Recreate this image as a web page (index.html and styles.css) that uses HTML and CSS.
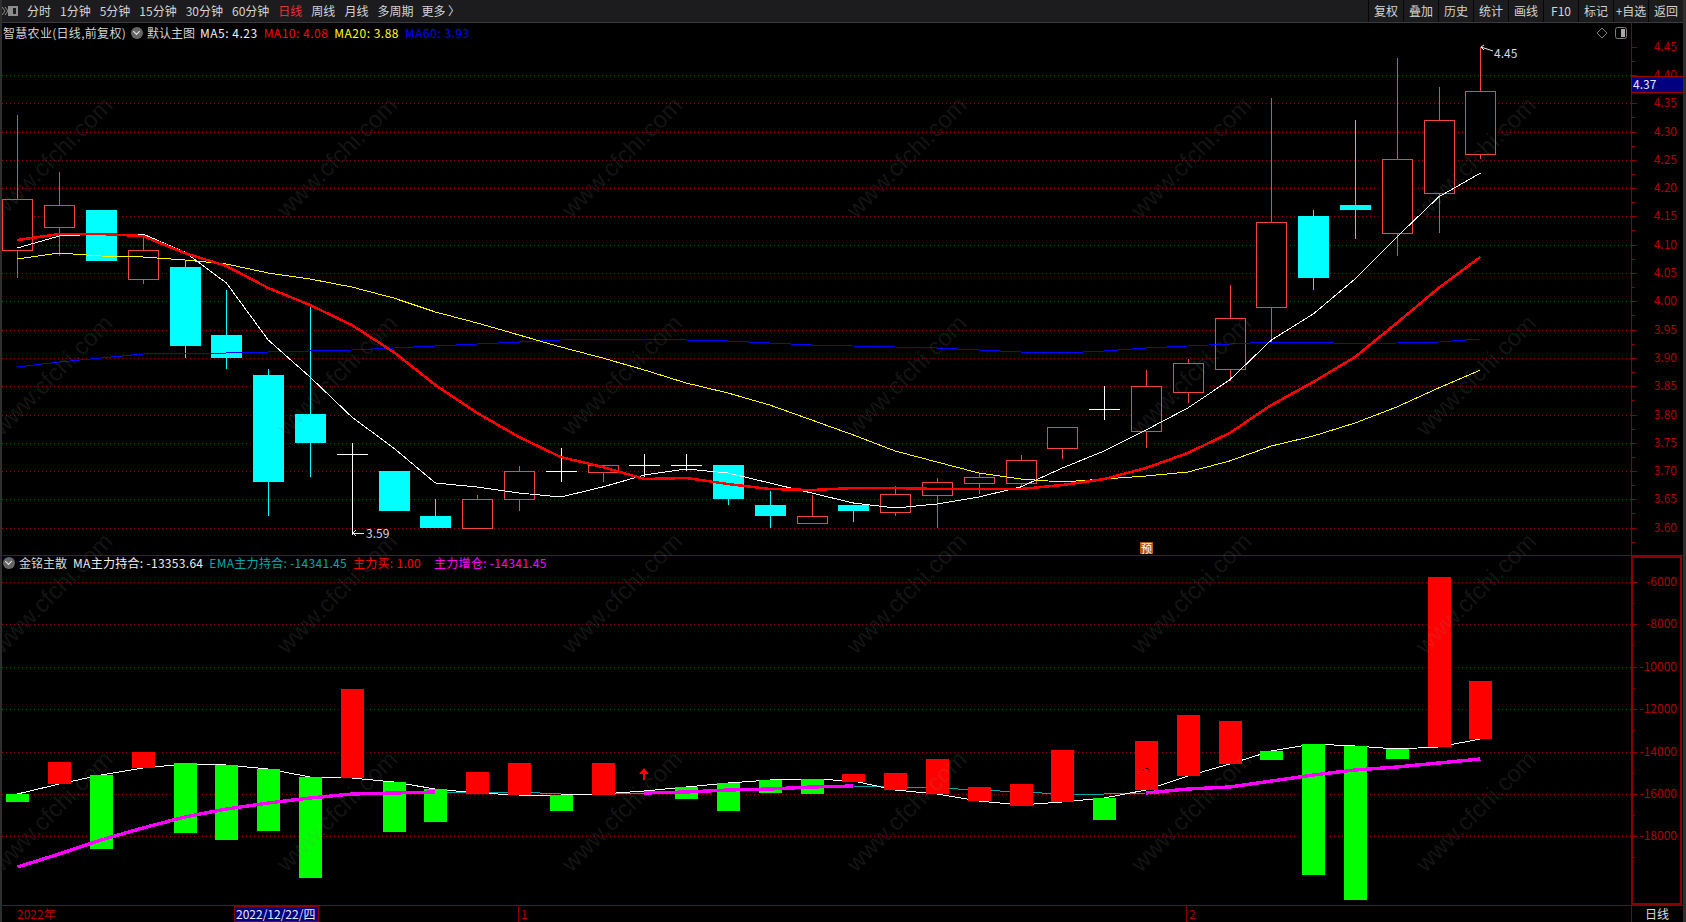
FILE: index.html
```html
<!DOCTYPE html>
<html lang="zh-CN">
<head>
	<meta charset="UTF-8">
	<title>智慧农业 日线</title>
	<link rel="stylesheet" href="styles.css">
</head>
<body>
	<div class="terminal">
		<!-- 顶部工具栏 -->
		<header class="toolbar">
			<svg class="collapse-icon" width="17" height="12" viewBox="0 0 17 12">
				<path d="M1 2l3 4-3 4M4 2l3 4-3 4" fill="none" stroke="#8c8c8c"/>
				<rect x="7.5" y="1.5" width="9" height="9" fill="#8c8c8c" stroke="#8c8c8c"/>
				<rect x="12" y="3" width="3" height="6" fill="#1c1c1e"/>
			</svg>
			<nav class="periods">
				<a>分时</a><a>1分钟</a><a>5分钟</a><a>15分钟</a><a>30分钟</a><a>60分钟</a>
				<a class="cur">日线</a><a>周线</a><a>月线</a><a>多周期</a><a class="more">更多 〉</a>
			</nav>
			<nav class="tools">
				<a>复权</a><a>叠加</a><a>历史</a><a>统计</a><a>画线</a><a>F10</a><a>标记</a><a>+自选</a><a>返回</a>
			</nav>
		</header>

		<div class="panels">
			<!-- 主图 -->
			<section class="panel panel-main">
				<div class="plot">
					<svg id="price-chart" class="chart" viewBox="2 23 1629 532"></svg>
					<div class="legend legend-main">
						<span class="stock-name">智慧农业(日线,前复权)</span>
						<i class="drop"></i>
						<span class="tpl-name">默认主图</span>
						<span class="c-white">MA5: 4.23</span>
						<span class="c-red">MA10: 4.08</span>
						<span class="c-yellow">MA20: 3.88</span>
						<span class="c-blue">MA60: 3.93</span>
					</div>
					<div class="corner-icons">
						<svg width="12" height="12" viewBox="0 0 12 12"><path d="M6 1l5 5-5 5-5-5z" fill="none" stroke="#7c7c7c"/></svg>
						<svg width="12" height="12" viewBox="0 0 12 12"><rect x=".5" y=".5" width="11" height="11" rx="2" fill="none" stroke="#7c7c7c"/><rect x="6" y="2" width="4" height="8" fill="#a8a8a8"/></svg>
					</div>
				</div>
				<svg id="price-axis" class="axis" viewBox="1631 23 52 532"></svg>
			</section>

			<!-- 副图 -->
			<section class="panel panel-sub">
				<div class="plot">
					<svg id="sub-chart" class="chart" viewBox="2 556 1629 349"></svg>
					<div class="legend legend-sub">
						<i class="drop"></i>
						<span class="tpl-name">金铭主散</span>
						<span class="c-white">MA主力持合: -13353.64</span>
						<span class="c-cyan">EMA主力持合: -14341.45</span>
						<span class="c-red">主力买: 1.00</span>
						<span class="c-magenta">主力增仓: -14341.45</span>
					</div>
				</div>
				<svg id="sub-axis" class="axis" viewBox="1631 556 52 349"></svg>
			</section>

			<svg id="watermark" class="watermark" viewBox="2 23 1629 882"></svg>
		</div>

		<!-- 底部日期轴 -->
		<footer class="date-bar">
			<svg id="date-axis" class="date-axis" viewBox="2 906 1629 16"></svg>
			<div class="cycle-name">日线</div>
		</footer>
	</div>
	<script src="chart.js"></script>
</body>
</html>
```

FILE: styles.css
```css
body{
	margin:0;
	padding:0;
	background:#000;
}
a{
	cursor:pointer;
}
.terminal{
	width:1681px;
	height:922px;
	border-left:2px solid #2e2e2e;
	border-right:3px solid #2e2e2e;
	display:flex;
	flex-direction:column;
	overflow:hidden;
	background:#000;
	color:#d4d4d4;
	font-family:"Noto Sans CJK SC","Liberation Sans",sans-serif;
	font-size:12px;
}

/* 工具栏 */
.toolbar{
	height:22px;
	border-bottom:1px solid #3a3a3c;
	background:#1c1c1e;
	display:flex;
	align-items:center;
	justify-content:space-between;
	margin:0 -3px 0 -2px;
	flex:none;
}
.collapse-icon{
	flex:none;
	margin-left:1px;
}
.periods{
	flex:1;
	display:flex;
	gap:9px;
	margin-left:9px;
}
.periods a{
	line-height:22px;
	white-space:nowrap;
}
.periods .cur{
	color:#e83232;
}
.periods .more{
	margin-left:-1px;
}
.tools{
	display:flex;
	margin-right:3px;
}
.tools a{
	width:34px;
	height:22px;
	line-height:22px;
	text-align:center;
	border-left:1px solid #060606;
	white-space:nowrap;
}

/* 图表区 */
.panels{
	position:relative;
	flex:none;
}
.panel{
	display:flex;
	border-bottom:1px solid #8a0000;
}
.panel-main{
	height:532px;
}
.panel-sub{
	height:349px;
}
.plot{
	position:relative;
	width:1629px;
	height:100%;
}
.chart{
	display:block;
	width:1629px;
	height:100%;
}
.axis{
	display:block;
	width:52px;
	height:100%;
}
.watermark{
	position:absolute;
	left:0;
	top:0;
	width:1629px;
	height:882px;
	pointer-events:none;
}

/* 图例 */
.legend{
	position:absolute;
	left:1px;
	top:2px;
	height:16px;
	display:flex;
	align-items:center;
	white-space:nowrap;
	line-height:16px;
}
.legend span{
	letter-spacing:.3px;
}
.legend .stock-name{
	margin-right:5px;
}
.legend .tpl-name{
	margin:0 6px 0 4px;
	letter-spacing:0;
}
.legend span+span{
	margin-right:6px;
}
.legend-main span+span{
	letter-spacing:.5px;
}
.legend-main .tpl-name{
	margin-right:5px;
}
.legend-sub{
	left:1px;
	top:-1px;
}
.legend-sub .c-red{
	margin-right:13px;
}
.drop{
	display:block;
	position:relative;
	width:12px;
	height:12px;
	border-radius:50%;
	background:#666;
	flex:none;
}
.drop:after{
	content:"";
	position:absolute;
	left:3px;
	top:2px;
	width:4px;
	height:4px;
	border-right:1px solid #eee;
	border-bottom:1px solid #eee;
	transform:rotate(45deg);
}
.c-white{
	color:#f0f0f0;
}
.c-red{
	color:#ff0000;
}
.c-yellow{
	color:#ffff00;
}
.c-blue{
	color:#0000ff;
}
.c-cyan{
	color:#00a8a8;
}
.c-magenta{
	color:#ff00ff;
}
.corner-icons{
	position:absolute;
	right:4px;
	top:4px;
	display:flex;
	gap:7px;
}
.corner-icons svg{
	display:block;
}

/* 日期轴 */
.date-bar{
	flex:1;
	display:flex;
	min-height:0;
}
.date-axis{
	display:block;
	width:1629px;
	height:16px;
}
.cycle-name{
	box-sizing:border-box;
	width:52px;
	border-left:1px solid #8a0000;
	padding-left:13px;
	line-height:15px;
	color:#dcdcdc;
}

/* svg 文字 */
.axis text,.date-axis text,.chart text{
	font-family:"Noto Sans CJK SC","Liberation Sans",sans-serif;
	font-size:12px;
}
.axis-label{
	fill:#b00000;
	text-anchor:end;
	dominant-baseline:central;
}
.date-label{
	fill:#b00000;
	dominant-baseline:central;
}
.date-cur{
	fill:#e8e8f8;
	dominant-baseline:central;
}
.note{
	fill:#d4d8e8;
	dominant-baseline:central;
}
.tag-text{
	fill:#e8e8ff;
	dominant-baseline:central;
}
.chart .badge-text{
	fill:#fff;
	font-size:11px;
	text-anchor:middle;
	dominant-baseline:central;
}
.watermark text{
	font-family:"Liberation Sans",sans-serif;
	font-size:24px;
	fill:rgba(128,128,128,.16);
	text-anchor:middle;
	dominant-baseline:central;
}
.crisp{
	shape-rendering:crispEdges;
}
```

FILE: chart.js
```js
// 每根K线的横坐标
var STEP = 41.8;
function xAt(i) {
	return 17.4 + STEP * i;
}

var SVG_NS = 'http://www.w3.org/2000/svg';
function add(parent, tag, attrs, text) {
	var el = document.createElementNS(SVG_NS, tag);
	for (var k in attrs) {
		el.setAttribute(k, attrs[k]);
	}
	if (text) el.textContent = text;
	parent.appendChild(el);
	return el;
}
function polyline(parent, ys, from, to, color, width) {
	var pts = [];
	for (var i = from; i <= to; i++) {
		pts.push(xAt(i).toFixed(1) + ',' + ys[i]);
	}
	add(parent, 'polyline', {
		points: pts.join(' '),
		fill: 'none',
		stroke: color,
		'stroke-width': width,
		'stroke-linejoin': 'round',
		class: 'crisp'
	});
}
function gridLine(parent, y) {
	add(parent, 'line', {
		x1: 2, x2: 1631, y1: y + .5, y2: y + .5,
		stroke: '#9a0000',
		'stroke-dasharray': '1 3',
		class: 'crisp'
	});
}

// K线: 上影, 下影, 实体上, 实体下, 类型(u阳 d阴 x十字)
var candles = [
	[115, 278, 199, 250, 'u'], [172, 256, 205, 227, 'u'], [210, 261, 210, 261, 'd'],
	[235, 284, 250, 279, 'u'], [261, 358, 267, 346, 'd'], [290, 369, 335, 358, 'd'],
	[369, 516, 375, 482, 'd'], [307, 477, 414, 443, 'd'], [443, 535, 454, 454, 'x'],
	[471, 511, 471, 511, 'd'], [499, 528, 516, 528, 'd'], [495, 528, 499, 528, 'u'],
	[466, 511, 471, 499, 'u'], [448, 482, 471, 471, 'x'], [465, 482, 465, 472, 'u'],
	[454, 477, 465, 465, 'x'], [454, 471, 465, 465, 'x'], [465, 505, 465, 499, 'd'],
	[491, 528, 505, 516, 'd'], [495, 523, 516, 523, 'u'], [505, 522, 505, 511, 'd'],
	[486, 516, 494, 512, 'u'], [478, 528, 482, 495, 'u'], [473, 494, 477, 483, 'u'],
	[455, 486, 460, 483, 'u'], [427, 459, 427, 448, 'u'], [386, 420, 409, 409, 'x'],
	[370, 448, 386, 431, 'u'], [359, 403, 363, 392, 'u'], [285, 381, 318, 369, 'u'],
	[98, 342, 222, 307, 'u'], [210, 290, 216, 278, 'd'], [120, 239, 205, 210, 'd'],
	[58, 256, 159, 233, 'u'], [87, 233, 120, 193, 'u'], [47, 159, 91, 154, 'u']
];

var ma5 = [248, 236, 234, 234, 252, 283, 340, 377, 417, 448, 483, 487, 493, 497, 487, 475, 469, 473, 483, 493, 503, 508, 504, 497, 487, 468, 451, 430, 408, 380, 340, 314, 279, 237, 197, 173];
var ma10 = [240, 234, 234, 236, 253, 266, 288, 305, 325, 352, 385, 413, 437, 457, 467, 479, 478, 484, 489, 490, 488, 488, 489, 489, 489, 485, 479, 468, 453, 433, 405, 382, 357, 323, 288, 257];
var ma20 = [259, 253, 256, 257, 260, 264, 273, 279, 287, 298, 312, 323, 335, 347, 358, 370, 383, 393, 405, 420, 435, 451, 462, 473, 479, 482, 479, 476, 472, 461, 446, 436, 423, 407, 388, 370];
var ma60 = [367, 362, 358, 354, 353, 353, 352, 351, 350, 348, 346, 344, 342, 340, 339, 339, 340, 341, 343, 345, 346, 347, 348, 350, 352, 353, 351, 348, 346, 344, 342, 342, 344, 343, 342, 339];

// 主图
var chart = document.getElementById('price-chart');
for (var g = 1; g <= 17; g++) {
	gridLine(chart, Math.round(46.6 + 28.3 * g));
}
candles.forEach(function (c, i) {
	var x = Math.round(xAt(i));
	var color = c[4] === 'd' ? '#00ffff' : c[4] === 'x' ? '#ffffff' : '#f24444';
	add(chart, 'line', { x1: x + .5, x2: x + .5, y1: c[0], y2: c[1], stroke: color, class: 'crisp' });
	if (c[4] === 'x') {
		add(chart, 'line', { x1: x - 15, x2: x + 16, y1: c[2] + .5, y2: c[2] + .5, stroke: color, class: 'crisp' });
	} else if (c[4] === 'u') {
		add(chart, 'rect', { x: x - 15 + .5, y: c[2] + .5, width: 30, height: c[3] - c[2], fill: '#000', stroke: color, class: 'crisp' });
	} else {
		add(chart, 'rect', { x: x - 15, y: c[2], width: 31, height: c[3] - c[2], fill: color, class: 'crisp' });
	}
});
polyline(chart, ma60, 0, 35, '#0000ff', 1);
polyline(chart, ma20, 0, 35, '#ffff00', 1);
polyline(chart, ma5, 0, 35, '#ffffff', 1);
polyline(chart, ma10, 0, 35, '#ff0000', 2.5);

// 最高最低价标注
add(chart, 'path', { d: 'M1481 47l12 4M1481 47l3-2M1481 47l3 3', fill: 'none', stroke: '#e8e8e8' });
add(chart, 'text', { x: 1494, y: 52, class: 'note' }, '4.45');
add(chart, 'path', { d: 'M353 533h11M353 533l3-3M353 533l3 3', fill: 'none', stroke: '#e8e8e8', class: 'crisp' });
add(chart, 'text', { x: 366, y: 532.5, class: 'note' }, '3.59');

// 预 标记
add(chart, 'rect', { x: 1140, y: 542, width: 13, height: 12, fill: '#b85410' });
add(chart, 'text', { x: 1146.5, y: 547.5, class: 'badge-text' }, '预');

// 价格轴
var axis = document.getElementById('price-axis');
add(axis, 'line', { x1: 1631.5, x2: 1631.5, y1: 23, y2: 555, stroke: '#8a0000', class: 'crisp' });
for (var t = 0; t <= 17; t++) {
	var ty = Math.round(46.6 + 28.3 * t);
	add(axis, 'line', { x1: 1632, x2: 1637, y1: ty + .5, y2: ty + .5, stroke: '#8a0000', class: 'crisp' });
	add(axis, 'line', { x1: 1632, x2: 1635, y1: ty + 14.5, y2: ty + 14.5, stroke: '#8a0000', class: 'crisp' });
	add(axis, 'text', { x: 1677, y: ty - 2, class: 'axis-label' }, (4.45 - t * .05).toFixed(2));
}
add(axis, 'rect', { x: 1631.5, y: 76.5, width: 52, height: 16, fill: '#000080', stroke: '#a00000', class: 'crisp' });
add(axis, 'text', { x: 1633, y: 83.5, class: 'tag-text' }, '4.37');

// 副图柱: 上, 下, 颜色(r红 g绿), 0表示无柱
var bars = [
	[794, 802, 'g'], [762, 784, 'r'], [775, 849, 'g'], [752, 768, 'r'], [763, 833, 'g'], [765, 840, 'g'],
	[769, 831, 'g'], [777, 878, 'g'], [689, 778, 'r'], [782, 832, 'g'], [789, 822, 'g'], [772, 794, 'r'],
	[763, 795, 'r'], [795, 811, 'g'], [763, 795, 'r'], 0, [787, 799, 'g'], [783, 811, 'g'],
	[780, 793, 'g'], [779, 794, 'g'], [774, 782, 'r'], [773, 790, 'r'], [759, 794, 'r'], [787, 801, 'r'],
	[784, 806, 'r'], [750, 802, 'r'], [798, 820, 'g'], [741, 790, 'r'], [715, 776, 'r'], [721, 764, 'r'],
	[751, 760, 'g'], [744, 875, 'g'], [746, 900, 'g'], [749, 759, 'g'], [577, 747, 'r'], [681, 739, 'r']
];
var holdMa = [794, 784, 775, 768, 764, 765, 769, 777, 778, 782, 789, 793, 795, 795, 794, 791, 787, 783, 780, 779, 781, 790, 794, 801, 805, 802, 798, 790, 776, 764, 751, 744, 746, 749, 747, 739];
var holdEma = [867, 854, 840, 828, 817, 809, 803, 798, 794, 793, 792, 792, 792, 794, 794, 793, 792, 790, 789, 787, 786, 787, 788, 790, 792, 794, 794, 793, 789, 787, 781, 775, 770, 767, 763, 759];

// 副图
var sub = document.getElementById('sub-chart');
var subYs = [582, 624, 667, 709, 752, 794, 836];
subYs.forEach(function (y) {
	gridLine(sub, y);
});
polyline(sub, holdEma, 10, 27, '#00a8a8', 1);
polyline(sub, holdMa, 0, 35, '#ffffff', 1);
bars.forEach(function (b, i) {
	if (!b) return;
	add(sub, 'rect', {
		x: Math.round(xAt(i)) - 11,
		y: b[0],
		width: 23,
		height: b[1] - b[0],
		fill: b[2] === 'r' ? '#ff0000' : '#00ff00',
		class: 'crisp'
	});
});
polyline(sub, holdEma, 0, 10, '#ff00ff', 3.4);
polyline(sub, holdEma, 15, 20, '#ff00ff', 3.4);
polyline(sub, holdEma, 27, 35, '#ff00ff', 3.4);

// 红色箭头和黑色尖角
add(sub, 'path', { d: 'M644 768l5 6h-4v6h-2v-6h-4z', fill: '#ff0000' });
add(sub, 'path', { d: 'M1141 773l4-5h2l4 5', fill: 'none', stroke: '#000', 'stroke-dasharray': '2 1', class: 'crisp' });

// 副图坐标轴
var subAxis = document.getElementById('sub-axis');
add(subAxis, 'rect', { x: 1632, y: 557, width: 49, height: 347, fill: 'none', stroke: '#8a0000', 'stroke-width': 2, class: 'crisp' });
subYs.forEach(function (y, n) {
	add(subAxis, 'line', { x1: 1632, x2: 1637, y1: y + .5, y2: y + .5, stroke: '#8a0000', class: 'crisp' });
	add(subAxis, 'line', { x1: 1632, x2: 1635, y1: y + 21.5, y2: y + 21.5, stroke: '#8a0000', class: 'crisp' });
	add(subAxis, 'text', { x: 1677, y: y - 2, class: 'axis-label' }, String(-6000 - 2000 * n));
});

// 日期轴
var dates = document.getElementById('date-axis');
add(dates, 'text', { x: 17, y: 913, class: 'date-label' }, '2022年');
add(dates, 'line', { x1: 518.5, x2: 518.5, y1: 906, y2: 922, stroke: '#8a0000', class: 'crisp' });
add(dates, 'text', { x: 521, y: 913, class: 'date-label' }, '1');
add(dates, 'line', { x1: 1186.5, x2: 1186.5, y1: 906, y2: 922, stroke: '#8a0000', class: 'crisp' });
add(dates, 'text', { x: 1189, y: 913, class: 'date-label' }, '2');
add(dates, 'rect', { x: 234.5, y: 906.5, width: 84, height: 15, fill: '#000080', stroke: '#8a0000', class: 'crisp' });
add(dates, 'text', { x: 236, y: 913, class: 'date-cur' }, '2022/12/22/四');

// 水印
var mark = document.getElementById('watermark');
for (var row = 0; row < 4; row++) {
	for (var col = 0; col < 6; col++) {
		var mx = 52 + 284.7 * col;
		var my = 157 + 218 * row;
		add(mark, 'text', { x: mx, y: my, transform: 'rotate(-45 ' + mx + ' ' + my + ')' }, 'www.cfchi.com');
	}
}
```
